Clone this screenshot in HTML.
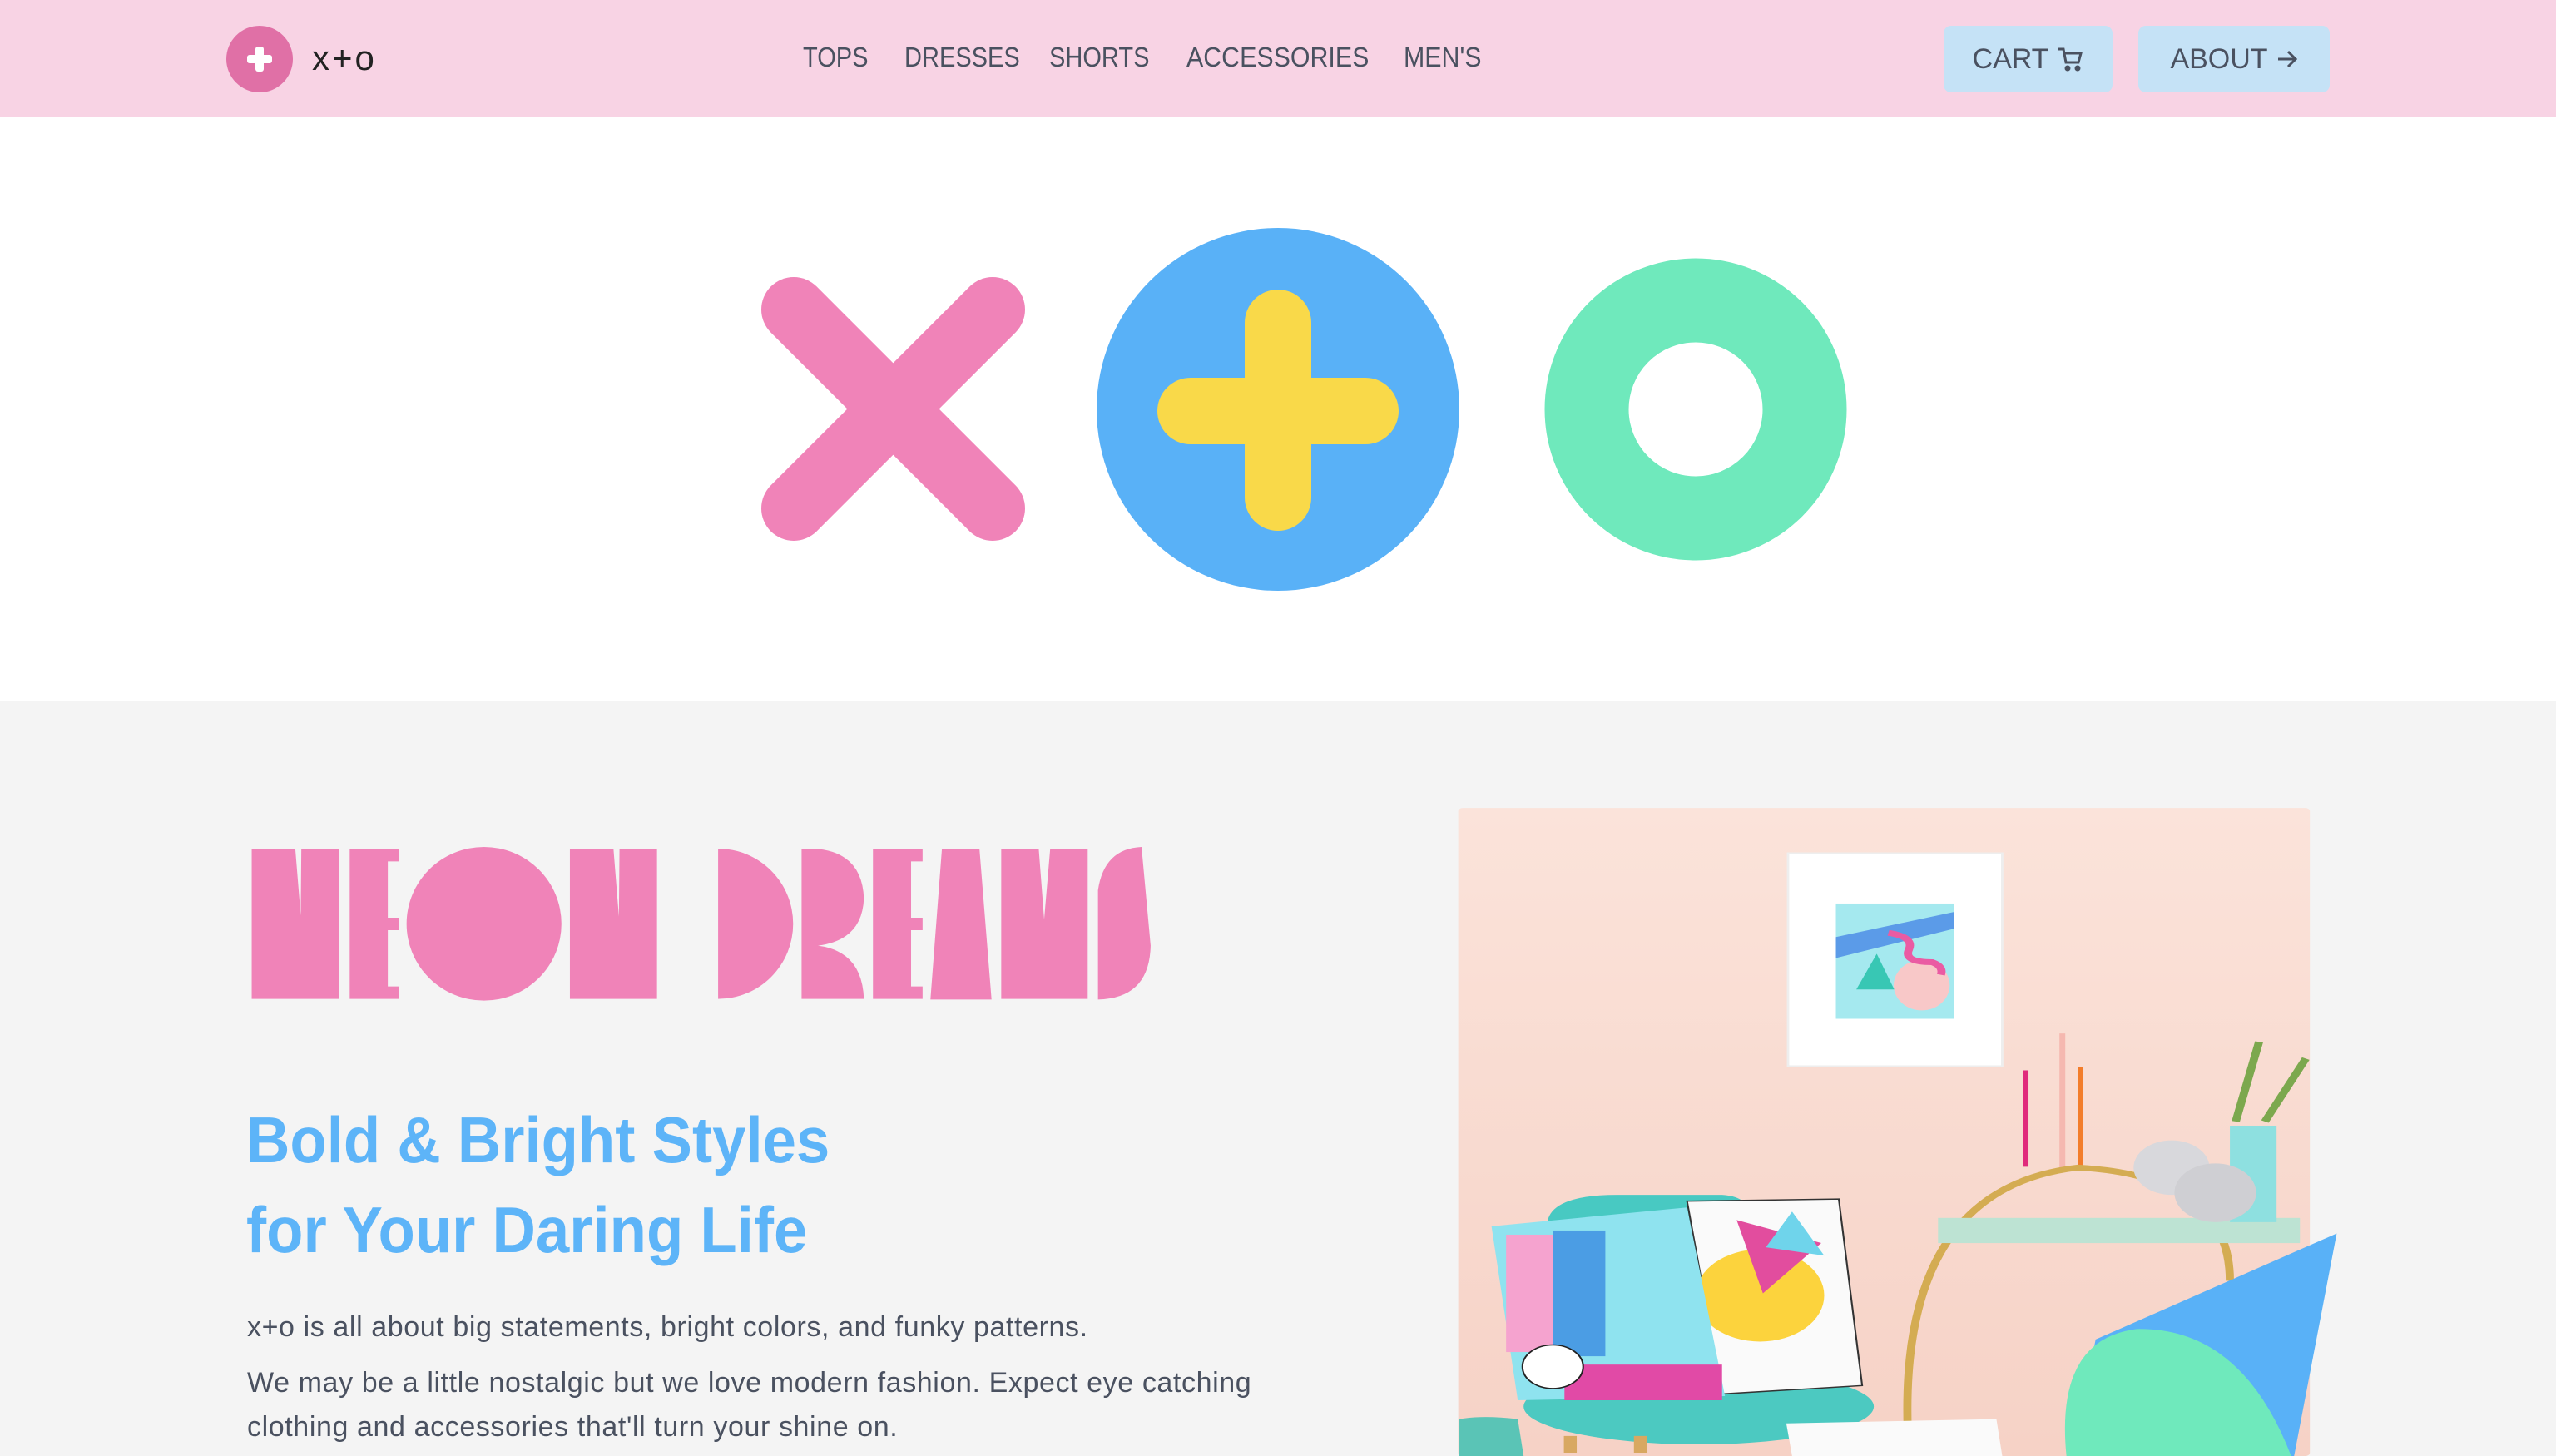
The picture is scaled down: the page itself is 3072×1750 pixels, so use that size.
<!DOCTYPE html>
<html><head><meta charset="utf-8"><style>
*{margin:0;padding:0;box-sizing:border-box}
body{width:3072px;height:1750px;overflow:hidden;background:#f4f4f4;font-family:"Liberation Sans",sans-serif;position:relative}
.nav{position:absolute;left:0;top:0;width:3072px;height:141px;background:#f8d3e4}
.hero{position:absolute;left:0;top:141px;width:3072px;height:701px;background:#fff}
.abs{position:absolute}
.link{position:absolute;top:50px;font-size:33px;color:#4a5160;letter-spacing:0px;transform:scaleX(0.88);transform-origin:left}
.btn{position:absolute;top:31px;height:80px;background:#c5e2f6;border-radius:9px;color:#4a5160;font-size:34px;display:flex;align-items:center;justify-content:center;gap:10px}
</style></head><body>
<div class="nav">
  <div class="abs" style="left:272px;top:31px;width:80px;height:80px;border-radius:50%;background:#e070a6"></div>
  <div class="abs" style="left:307px;top:56px;width:10px;height:30px;background:#fff;border-radius:3px"></div>
  <div class="abs" style="left:297px;top:66px;width:30px;height:10px;background:#fff;border-radius:3px"></div>
  <div class="abs" style="left:375px;top:46px;font-size:42px;color:#222;letter-spacing:3px">x+o</div>
  <div class="link" style="left:965px">TOPS</div>
  <div class="link" style="left:1087px">DRESSES</div>
  <div class="link" style="left:1261px">SHORTS</div>
  <div class="link" style="left:1426px;transform:scaleX(0.92)">ACCESSORIES</div>
  <div class="link" style="left:1687px;transform:scaleX(0.92)">MEN'S</div>
  <div class="btn" style="left:2336px;width:203px">CART
    <svg width="32" height="32" viewBox="0 0 32 32" fill="none" stroke="#4a5160" stroke-width="3"><path d="M2 4h6l3 16h15l3-11H10"/><circle cx="13" cy="27" r="2" fill="#4a5160"/><circle cx="25" cy="27" r="2" fill="#4a5160"/></svg></div>
  <div class="btn" style="left:2570px;width:230px">ABOUT
    <svg width="26" height="26" viewBox="0 0 26 26" fill="none" stroke="#4a5160" stroke-width="3"><path d="M2 13h21M14 4l9 9-9 9"/></svg></div>
</div>
<div class="hero">
  <svg width="3072" height="701" viewBox="0 141 3072 701" style="position:absolute;left:0;top:0">
    <g stroke="#f083b8" stroke-width="78" stroke-linecap="round"><line x1="954" y1="372" x2="1193" y2="611"/><line x1="1193" y1="372" x2="954" y2="611"/></g>
    <circle cx="1536" cy="492" r="218" fill="#59b1f7"/>
    <g stroke="#f9d949" stroke-width="80" stroke-linecap="round"><line x1="1431" y1="494" x2="1641" y2="494"/><line x1="1536" y1="388" x2="1536" y2="598"/></g>
    <circle cx="2038" cy="492" r="131" fill="none" stroke="#6fe9bc" stroke-width="101"/>
  </svg>
</div>
<svg class="abs" style="left:280px;top:990px" width="1140" height="240" viewBox="0 0 1568 720" preserveAspectRatio="none" fill="#f083b8">
  <polygon points="31,90 103,90 112,330 113,90 175,90 175,632 31,632"/>
  <polygon points="193,90 275,90 275,136 256,136 256,339 275,339 275,384 256,384 256,587 275,587 275,632 193,632"/>
  <ellipse cx="415" cy="361" rx="128" ry="277"/>
  <polygon points="557,90 629,90 638,335 639,90 701,90 701,632 557,632"/>
  <path d="M802,90 A124,271 0 0 1 802,632 Z"/>
  <path d="M940,90 L960,90 Q1040,100 1043,270 Q1040,420 967,440 Q1040,460 1043,632 L940,632 Z"/>
  <polygon points="1058,90 1140,90 1140,136 1121,136 1121,339 1140,339 1140,384 1121,384 1121,587 1140,587 1140,632 1058,632"/>
  <polygon points="1172,90 1234,90 1254,634 1153,634"/>
  <polygon points="1270,90 1332,90 1341,345 1351,90 1413,90 1413,632 1270,632"/>
  <path d="M1502,84 L1517,440 Q1515,630 1430,634 L1430,240 Q1440,90 1502,84 Z"/>
</svg>
<div class="abs" style="left:296px;top:1316px;font-size:78px;line-height:108px;color:#5db4f8;font-weight:bold;transform:scaleX(0.93);transform-origin:left;white-space:nowrap">Bold &amp; Bright Styles<br>for Your Daring Life</div>
<div class="abs" style="left:297px;top:1569px;font-size:34px;color:#4a5160;line-height:52px;letter-spacing:0.6px;white-space:nowrap">x+o is all about big statements, bright colors, and funky patterns.</div>
<div class="abs" style="left:297px;top:1636px;font-size:34px;color:#4a5160;line-height:53px;width:1400px;letter-spacing:0.6px">We may be a little nostalgic but we love modern fashion. Expect eye catching<br>clothing and accessories that'll turn your shine on.</div>
<svg class="abs" style="left:1740px;top:960px" width="1100" height="790" viewBox="0 0 1568 1568" preserveAspectRatio="none">
  <defs><linearGradient id="w" x1="0" y1="0" x2="0" y2="1"><stop offset="0" stop-color="#fbe3da"/><stop offset="1" stop-color="#f6d2c6"/></linearGradient></defs>
  <rect x="18" y="22" width="1459" height="1546" rx="8" fill="url(#w)"/>
  <rect x="583" y="130" width="367" height="508" fill="#fff" stroke="#eee" stroke-width="4"/>
  <rect x="665" y="250" width="203" height="275" fill="#a5e9ef"/>
  <polygon points="665,330 868,270 868,310 665,380" fill="#5b9be8"/>
  <ellipse cx="812" cy="445" rx="48" ry="60" fill="#f8c8c8"/>
  <path d="M755,320 Q800,330 790,360 Q780,390 830,390 Q850,400 845,420" stroke="#ea5ba3" stroke-width="14" fill="none"/>
  <polygon points="735,370 700,455 765,455" fill="#38c7b4"/>
  <rect x="1048" y="560" width="10" height="320" fill="#f5b8b0"/>
  <rect x="986" y="648" width="9" height="230" fill="#e02a7c"/>
  <rect x="1080" y="640" width="9" height="240" fill="#f37d2b"/>
  <path d="M790,1560 Q760,930 1080,880 Q1340,900 1340,1150" stroke="#d4ac52" stroke-width="14" fill="none"/>
  <rect x="840" y="1000" width="620" height="60" fill="#bde3d3"/>
  <rect x="1340" y="780" width="80" height="230" fill="#8ee0e0"/>
  <circle cx="1240" cy="880" r="65" fill="#d8d8dc"/><circle cx="1315" cy="940" r="70" fill="#cfcfd3"/>
  <path d="M1350,770 L1390,580 M1400,770 L1470,620" stroke="#7ca84e" stroke-width="14"/>
  <path d="M170,1020 Q170,945 290,945 L470,945 Q530,950 520,1030 Z" fill="#48c9c2"/>
  <ellipse cx="430" cy="1450" rx="300" ry="90" fill="#4cc9c1"/>
  <polygon points="410,960 670,955 710,1400 470,1420" fill="#fafafa" stroke="#333" stroke-width="3"/>
  <circle cx="535" cy="1185" r="110" fill="#fcd33d"/>
  <polygon points="495,1005 640,1060 540,1180" fill="#e24d9e"/>
  <polygon points="590,985 645,1090 545,1070" fill="#6fd4eb"/>
  <polygon points="75,1020 410,975 475,1425 120,1435" fill="#8fe3ef"/>
  <rect x="100" y="1040" width="90" height="280" fill="#f5a3cf"/>
  <rect x="180" y="1030" width="90" height="300" fill="#4b9de4"/>
  <rect x="200" y="1350" width="270" height="85" fill="#e14aa6"/>
  <circle cx="180" cy="1355" r="52" fill="#fff" stroke="#222" stroke-width="3"/>
  <path d="M210,1560 L210,1520 M330,1560 L330,1520" stroke="#d8a861" stroke-width="22"/>
  <polygon points="580,1490 940,1480 950,1568 590,1568" fill="#fafafa"/>
  <polygon points="1523,1037 1450,1568 1070,1568 1110,1290" fill="#59b1f7"/>
  <path d="M1060,1568 Q1040,1290 1180,1265 Q1360,1260 1445,1568 Z" fill="#6fe9bc"/>
  <path d="M20,1568 L20,1480 Q60,1470 120,1480 L130,1568 Z" fill="#5ac4b6"/>
</svg>
</body></html>
